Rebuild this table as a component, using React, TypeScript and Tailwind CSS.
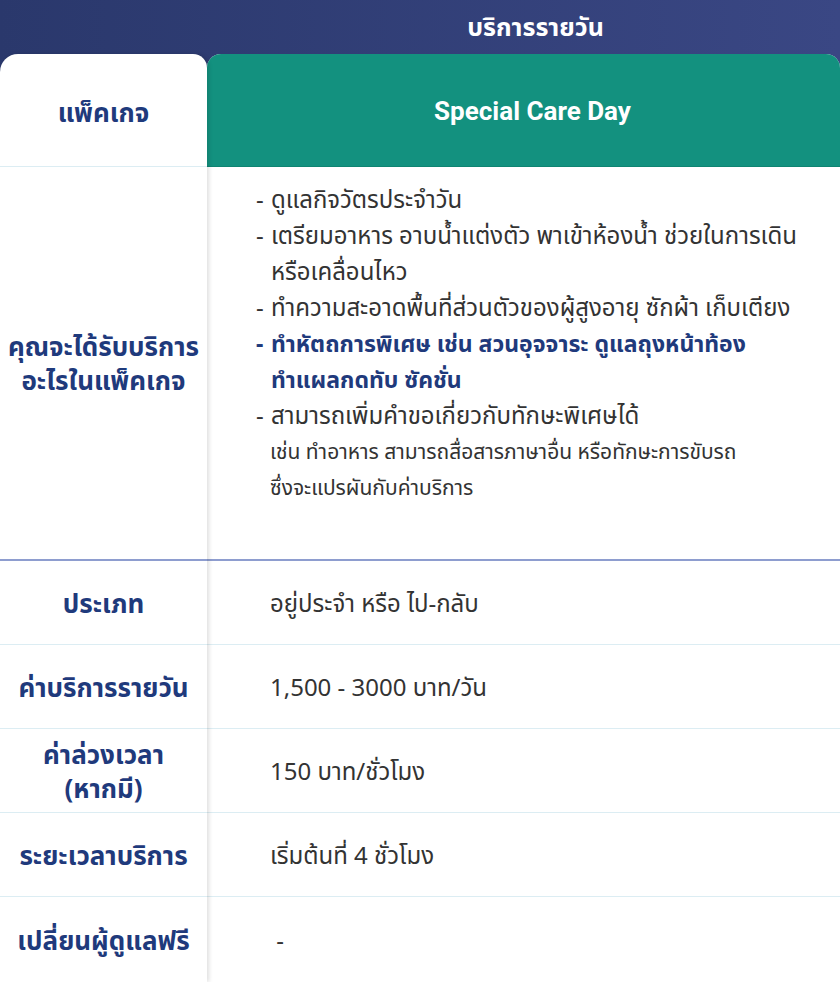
import React from 'react';

const labelClass =
  'flex items-center justify-center text-center font-bold text-[26px] leading-[34px] text-[#1f3a7c]';

const rows = [
  { label: 'ประเภท', value: 'อยู่ประจำ หรือ ไป-กลับ' },
  { label: 'ค่าบริการรายวัน', value: '1,500 - 3000 บาท/วัน' },
  { label: 'ค่าล่วงเวลา\n(หากมี)', value: '150 บาท/ชั่วโมง' },
  { label: 'ระยะเวลาบริการ', value: 'เริ่มต้นที่ 4 ชั่วโมง' },
  { label: 'เปลี่ยนผู้ดูแลฟรี', value: ' -' },
];

export default function App() {
  return (
    <div
      className="w-[840px] h-[982px] overflow-hidden bg-gradient-to-r from-[#2a386c] to-[#3a4784]"
      style={{ fontFamily: '"Noto Sans", "Noto Sans Thai", Roboto, sans-serif' }}
    >
      {/* top band */}
      <div className="flex h-[54px]">
        <div className="w-[207px]" />
        <div className="flex-1 flex items-center justify-center pl-[24px] text-white font-bold text-[25px]">
          บริการรายวัน
        </div>
      </div>

      <div className="flex">
        {/* sticky label column */}
        <div className="relative z-10 w-[207px] bg-white rounded-tl-[18px] rounded-tr-[14px] shadow-[2px_0_4px_rgba(0,0,0,0.13)]">
          <div className={`${labelClass} h-[113px] pt-[4px] border-b border-[#dcedf3]`}>แพ็คเกจ</div>
          <div className={`${labelClass} h-[394px] border-b-2 border-[#8e9dcf]`}>
            คุณจะได้รับบริการ
            <br />
            อะไรในแพ็คเกจ
          </div>
          {rows.map((r, i) => (
            <div
              key={i}
              className={`${labelClass} whitespace-pre-line ${i < rows.length - 1 ? 'h-[84px] border-b border-[#dcedf3]' : 'h-[85px]'}`}
            >
              {r.label}
            </div>
          ))}
        </div>

        {/* package column */}
        <div className="flex-1 bg-white rounded-t-[14px]">
          <div
            className="h-[113px] rounded-t-[14px] bg-[#13917f] border-b border-[#0f8472] flex items-center justify-center pt-[2px] pl-[18px] text-white font-bold text-[26px]"
            style={{ fontFamily: 'Roboto, sans-serif' }}
          >
            Special Care Day
          </div>
          <div className="h-[394px] border-b-2 border-[#8e9dcf] pl-[49px] pt-[14px] text-[24px] leading-[36px] text-[#333333]">
            <ListItem>ดูแลกิจวัตรประจำวัน</ListItem>
            <ListItem>
              เตรียมอาหาร อาบน้ำแต่งตัว พาเข้าห้องน้ำ ช่วยในการเดิน
              <br />
              หรือเคลื่อนไหว
            </ListItem>
            <ListItem>ทำความสะอาดพื้นที่ส่วนตัวของผู้สูงอายุ ซักผ้า เก็บเตียง</ListItem>
            <div className="font-bold text-[23px] text-[#1f3a7c]">
              <ListItem>
                ทำหัตถการพิเศษ เช่น สวนอุจจาระ ดูแลถุงหน้าท้อง
                <br />
                ทำแผลกดทับ ซัคชั่น
              </ListItem>
            </div>
            <ListItem>สามารถเพิ่มคำขอเกี่ยวกับทักษะพิเศษได้</ListItem>
            <div className="pl-[14px] text-[21px] leading-[36px]">
              เช่น ทำอาหาร สามารถสื่อสารภาษาอื่น หรือทักษะการขับรถ
              <br />
              ซึ่งจะแปรผันกับค่าบริการ
            </div>
          </div>
          {rows.map((r, i) => (
            <div
              key={i}
              className={`flex items-center pl-[63px] text-[24px] text-[#333333] whitespace-pre ${i < rows.length - 1 ? 'h-[84px] border-b border-[#dcedf3]' : 'h-[85px]'}`}
            >
              {r.value}
            </div>
          ))}
        </div>
      </div>
    </div>
  );
}

function ListItem({ children }: { children: React.ReactNode }) {
  return (
    <div className="flex">
      <span className="w-[15px] shrink-0">-</span>
      <span>{children}</span>
    </div>
  );
}
